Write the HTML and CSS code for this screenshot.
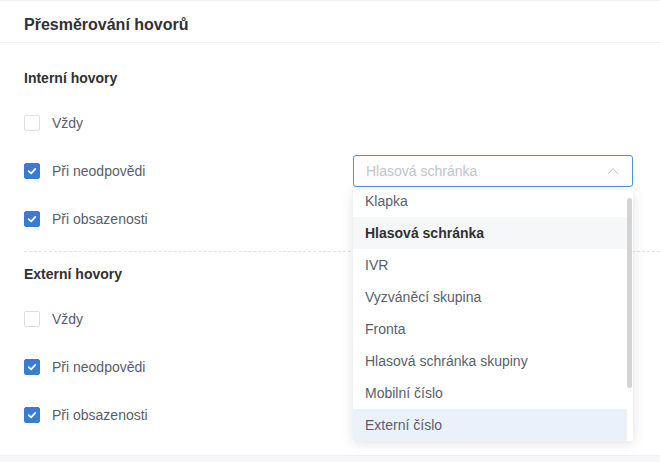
FILE: index.html
```html
<!DOCTYPE html>
<html lang="cs">
<head>
  <meta charset="UTF-8" />
  <meta name="viewport" content="width=device-width, initial-scale=1.0"/>
  <title>Přesměrování hovorů</title>
  <link rel="stylesheet" href="styles.css">
</head>
<body>
  <div class="panel">
    <div class="panel-header">
      <h2>Přesměrování hovorů</h2>
    </div>

    <div class="group group-internal">
      <h3>Interní hovory</h3>
      <div class="rows">
        <div class="row">
          <label class="check"><span class="box"></span>Vždy</label>
        </div>
        <div class="row">
          <label class="check"><span class="box checked"><svg viewBox="0 0 16 16"><path d="M4.2 8.2 L7 10.8 L11.8 5.6"/></svg></span>Při neodpovědi</label>
          <div class="select open">
            <span class="placeholder">Hlasová schránka</span>
            <svg class="arrow" viewBox="0 0 12 8"><path d="M1 7 L6 1.5 L11 7"/></svg>

            <div class="dropdown">
              <ul class="options">
                <li>Klapka</li>
                <li class="selected">Hlasová schránka</li>
                <li>IVR</li>
                <li>Vyzváněcí skupina</li>
                <li>Fronta</li>
                <li>Hlasová schránka skupiny</li>
                <li>Mobilní číslo</li>
                <li class="hover">Externí číslo</li>
              </ul>
              <div class="scrollbar"></div>
            </div>
          </div>
        </div>
        <div class="row">
          <label class="check"><span class="box checked"><svg viewBox="0 0 16 16"><path d="M4.2 8.2 L7 10.8 L11.8 5.6"/></svg></span>Při obsazenosti</label>
          <div class="select"></div>
        </div>
      </div>
    </div>

    <div class="group group-external">
      <h3>Externí hovory</h3>
      <div class="rows">
        <div class="row">
          <label class="check"><span class="box"></span>Vždy</label>
        </div>
        <div class="row">
          <label class="check"><span class="box checked"><svg viewBox="0 0 16 16"><path d="M4.2 8.2 L7 10.8 L11.8 5.6"/></svg></span>Při neodpovědi</label>
          <div class="select"></div>
        </div>
        <div class="row">
          <label class="check"><span class="box checked"><svg viewBox="0 0 16 16"><path d="M4.2 8.2 L7 10.8 L11.8 5.6"/></svg></span>Při obsazenosti</label>
          <div class="select"></div>
        </div>
      </div>
    </div>
  </div>
  <div class="footer"></div>
</body>
</html>
```

FILE: styles.css
```css
* {
  margin: 0;
  padding: 0;
  box-sizing: border-box;
}

body, html {
  height: 100%;
  font-family: 'Liberation Sans', Arial, sans-serif;
  background-color: #f7f7f9;
}

.panel {
  background-color: #fff;
  border-top: 1px solid #eff0f3;
  border-bottom: 1px solid #eeeff2;
}

.panel-header {
  height: 42px;
  padding: 14px 24px 0;
  border-bottom: 1px solid #eeeff2;
}

h2 {
  font-size: 16px;
  line-height: 20px;
  color: #303133;
}

h3 {
  font-size: 14px;
  line-height: 20px;
  color: #303133;
}

.group {
  margin-left: 24px;
}

.group-internal {
  padding-top: 25px;
  padding-bottom: 16px;
  border-bottom: 1px dashed #e2e3e7;
}

.group-external {
  padding-top: 12px;
  padding-bottom: 24px;
}

.rows {
  margin-top: 19px;
  display: flex;
  flex-direction: column;
  gap: 16px;
}

.row {
  height: 32px;
  display: grid;
  grid-template-columns: 329px 280px;
  align-items: center;
}

.check {
  display: flex;
  align-items: center;
  gap: 12px;
  font-size: 14px;
  color: #5a5e6b;
}

.box {
  width: 16px;
  height: 16px;
  border: 1px solid #dcdfe6;
  border-radius: 2px;
  background-color: #fff;
}

.box.checked {
  background-color: #3a7bd5;
  border-color: #3a7bd5;
}

.box svg {
  display: block;
  width: 14px;
  height: 14px;
  fill: none;
  stroke: #fff;
  stroke-width: 2;
  stroke-linecap: round;
  stroke-linejoin: round;
}

.select {
  position: relative;
  height: 30px;
  border: 1px solid #dcdfe6;
  border-radius: 3px;
  display: flex;
  align-items: center;
  padding: 0 12px;
  font-size: 14px;
}

.select.open {
  height: 32px;
  border-color: #4a93df;
}

.placeholder {
  color: #c0c4cc;
  flex: 1;
}

.arrow {
  width: 12px;
  height: 8px;
  margin-right: 1px;
  fill: none;
  stroke: #c0c4cc;
  stroke-width: 1;
}

.dropdown {
  position: absolute;
  top: 34px;
  left: -1px;
  width: 280px;
  height: 251px;
  background-color: #fff;
  box-shadow: 0 2px 12px rgba(0, 0, 0, 0.12);
  overflow: hidden;
  z-index: 10;
}

.options {
  list-style: none;
  margin-top: -5px;
  width: 274px;
}

.options li {
  height: 32px;
  line-height: 32px;
  padding: 0 12px;
  font-size: 14px;
  color: #5a5e6b;
}

.options li.selected {
  font-weight: bold;
  color: #303133;
  background-color: #f6f7f9;
}

.options li.hover {
  background-color: #ebf1f9;
  border-radius: 2px;
}

.scrollbar {
  position: absolute;
  top: 8px;
  right: 1px;
  width: 5px;
  height: 190px;
  border-radius: 3px;
  background-color: #d3d3d6;
}

.footer {
  height: 10px;
}
```
